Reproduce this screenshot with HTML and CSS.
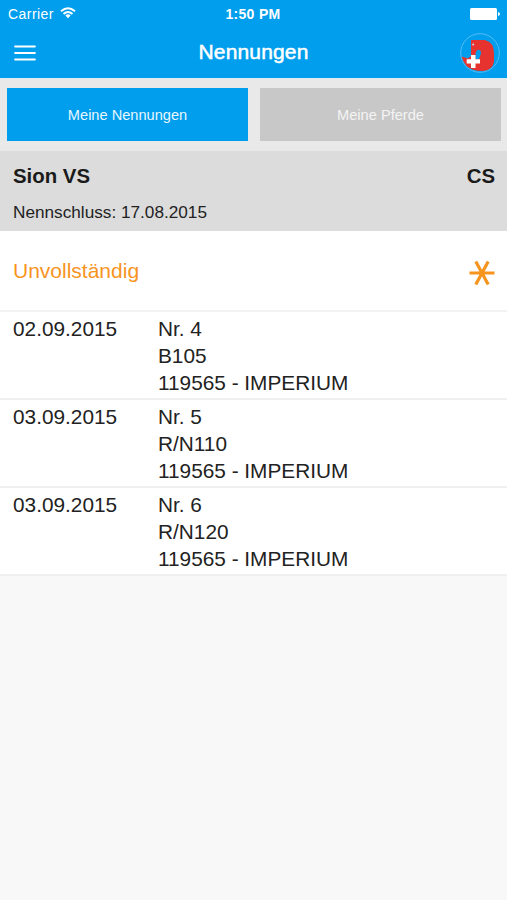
FILE: index.html
```html
<!DOCTYPE html>
<html lang="de">
<head>
<meta charset="utf-8">
<title>Nennungen</title>
<link rel="stylesheet" href="styles.css">
</head>
<body>
<header class="top">
  <div class="status">
    <div class="carrier"><span>Carrier</span>
      <svg class="wifi" width="16" height="12" viewBox="0 0 16 12" fill="none" stroke="#fff" stroke-width="2"><path d="M1 4.3Q8-1.9 15 4.3M3.5 7Q8 3 12.5 7"/><path d="M5.4 8.4Q8 6.2 10.6 8.4L8 11.2Z" fill="#fff" stroke="none"/></svg>
    </div>
    <div class="time">1:50 PM</div>
    <svg class="battery" width="30" height="12" viewBox="0 0 30 12" fill="#fff"><rect width="27" height="12" rx="1.5"/><path d="M28 4q2 .4 2 2t-2 2z"/></svg>
  </div>
  <div class="nav">
    <svg class="menu" width="22" height="18" viewBox="0 0 22 18" stroke="#fff" stroke-width="2.2" stroke-linecap="round"><path d="M1.200 2.500h19.600M1.200 9h19.600M1.200 15.500h19.600"/></svg>
    <h1>Nennungen</h1>
    <svg class="logo" width="40" height="40" viewBox="0 0 40 40"><path d="M11 7H25Q34 9 34 21V29Q32 38 22 38Q12 38 6.500 33Q2.500 28 1.500 23.500L8 25.500L11 23Z" fill="#e7332f"/><path d="M15.800 19.500Q16.500 16.500 19 16.800Q22 18 20.500 22L19 26.200H15.500V22Z" fill="#009eec"/><circle cx="13.200" cy="11.500" r="1" fill="#c7dff2"/><path d="M11 22h4.500v4.200H20v4.400h-4.500V35H11v-4.400H6.700v-4.400H11z" fill="#fff"/><circle cx="20" cy="20" r="19.300" fill="none" stroke="#55bdf3" stroke-width="1"/></svg>
  </div>
</header>
<nav class="tabs">
  <div class="tab active">Meine Nennungen</div>
  <div class="tab">Meine Pferde</div>
</nav>
<section class="event">
  <div class="event-title"><span>Sion VS</span><span>CS</span></div>
  <div class="deadline">Nennschluss: 17.08.2015</div>
</section>
<main>
  <div class="state">
    <span>Unvollständig</span>
    <svg class="star" width="26" height="26" viewBox="0 0 26 26" stroke="#f7941e" stroke-width="3.200"><path d="M.5 13H25.500M6.800 1.500L19.200 24.500M19.200 1.500L6.800 24.500"/></svg>
  </div>
  <div class="entry"><div>02.09.2015</div><div>Nr. 4<br>B105<br>119565 - IMPERIUM</div></div>
  <div class="entry"><div>03.09.2015</div><div>Nr. 5<br>R/N110<br>119565 - IMPERIUM</div></div>
  <div class="entry"><div>03.09.2015</div><div>Nr. 6<br>R/N120<br>119565 - IMPERIUM</div></div>
</main>
</body>
</html>
```
FILE: styles.css
```css
* { box-sizing: border-box; }
body {
  margin: 0;
  min-height: 900px;
  background: #f8f8f8;
  color: #222;
  font-family: "Liberation Sans", Arial, sans-serif;
}
svg { display: block; flex: none; }
.top { height: 78px; background: #009eec; color: #fff; }
.status {
  display: grid;
  grid-template-columns: 1fr auto 1fr;
  align-items: center;
  height: 27px;
  padding: 0 7px 0 8px;
}
.carrier { display: flex; align-items: center; gap: 6px; font-size: 14px; letter-spacing: .45px; }
.wifi { margin-top: -2px; }
.time { margin-left: -2px; font-size: 14px; font-weight: bold; letter-spacing: .3px; }
.battery { justify-self: end; }
.nav {
  display: grid;
  grid-template-columns: 40px 1fr 40px;
  align-items: center;
  height: 51px;
  padding: 0 7px 0 14px;
}
.nav h1 {
  margin: -2px 0 0 -7px;
  text-align: center;
  font-size: 21px;
  font-weight: normal;
  line-height: 24px;
  letter-spacing: .15px;
  -webkit-text-stroke: .5px #fff;
}
.tabs {
  display: grid;
  grid-template-columns: 1fr 1fr;
  gap: 12px;
  height: 73px;
  padding: 9px 6px 10px 7px;
  border-top: 1px solid #dcebf4;
  background: #e9e9e9;
}
.tab {
  display: flex;
  align-items: center;
  justify-content: center;
  background: #c8c8c8;
  color: #f4f4f4;
  font-size: 14.6px;
}
.tab.active { background: #009eec; color: #e8f7ff; }
.event { height: 80px; padding: 12px 12px 0 13px; background: #dcdcdc; }
.event-title {
  display: flex;
  justify-content: space-between;
  font-size: 20.4px;
  font-weight: bold;
  line-height: 26px;
  color: #1a1a1a;
}
.deadline { margin-top: 12px; font-size: 17.2px; line-height: 22px; }
.state {
  display: flex;
  align-items: center;
  justify-content: space-between;
  height: 81px;
  padding: 1px 12px 0 13px;
  border-bottom: 2px solid #f3f3f3;
  background: #fff;
  color: #f7941e;
  font-size: 21px;
}
.star { margin-top: 3px; }
.entry {
  display: grid;
  grid-template-columns: 145px 1fr;
  height: 88px;
  padding: 3px 12px 0 13px;
  border-bottom: 2px solid #f0f0f0;
  background: #fff;
  font-size: 20.8px;
  line-height: 27px;
}
```
